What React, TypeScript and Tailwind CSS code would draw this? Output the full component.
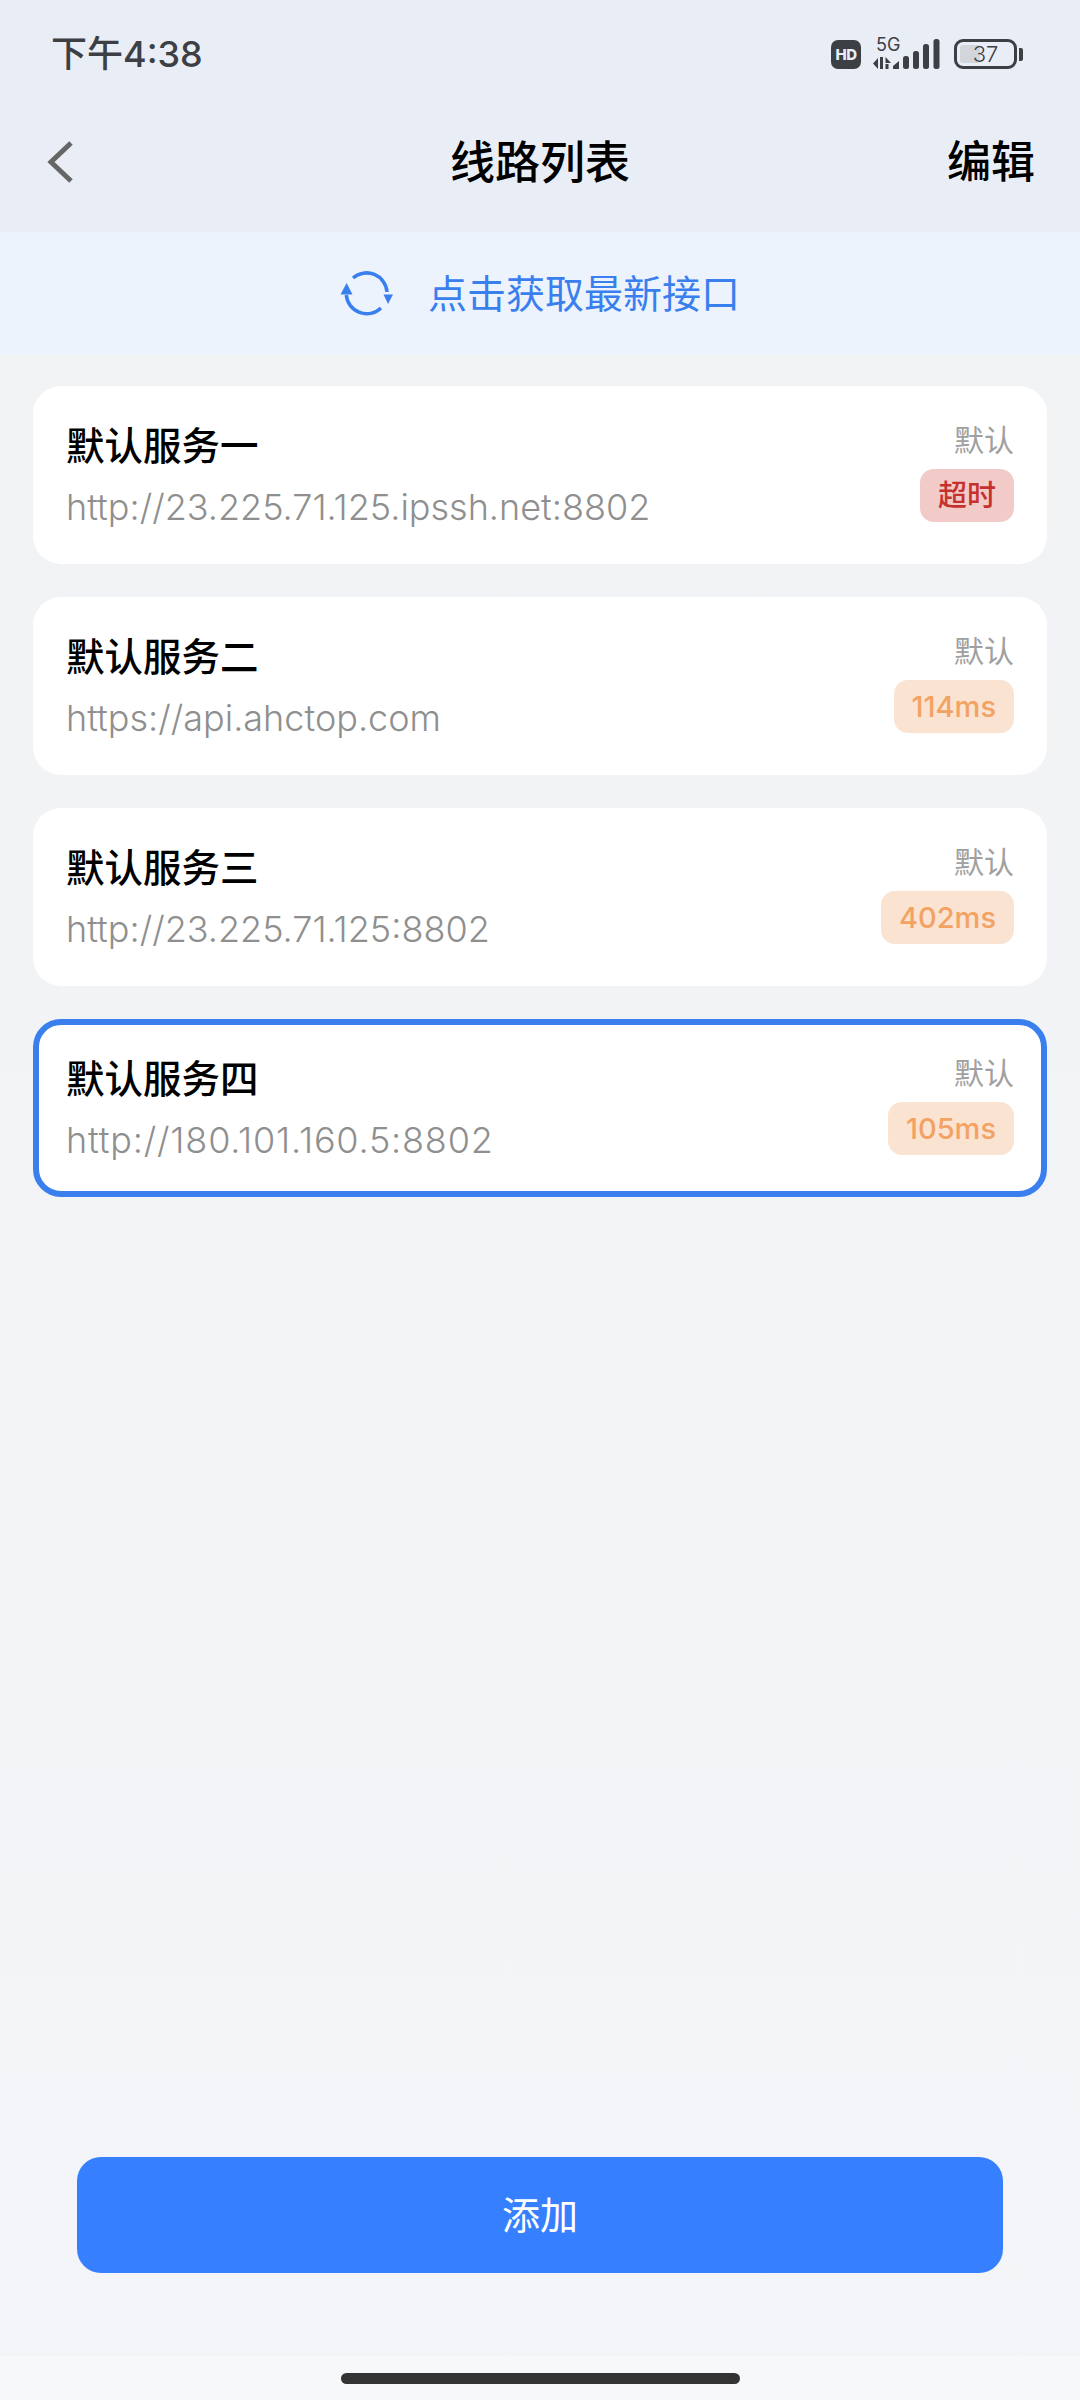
import React from "react";

const servers = [
  { name: "默认服务一", url: "http://23.225.71.125.ipssh.net:8802", badge: "超时", timeout: true },
  { name: "默认服务二", url: "https://api.ahctop.com", badge: "114ms" },
  { name: "默认服务三", url: "http://23.225.71.125:8802", badge: "402ms" },
  { name: "默认服务四", url: "http://180.101.160.5:8802", badge: "105ms", active: true },
];

const cjk = "font-['Inter','Noto_Sans_CJK_SC',sans-serif]";

function StatusIcons() {
  return (
    <div className="flex items-center text-[#3c3f43]">
      <div className="flex h-[29px] w-[30px] items-center justify-center rounded-[7px] bg-[#3c3f43] text-[15px] font-extrabold leading-none tracking-[-0.5px] text-[#e9eef6]">
        HD
      </div>
      <div className="relative ml-[12px] h-[32px] w-[67px]">
        <span className="absolute left-[3px] top-[-4px] text-[18px] leading-[22px]">5G</span>
        <svg className="absolute left-0 top-0" width="67" height="32" viewBox="0 0 67 32" fill="#3c3f43">
          <path d="M0 25.5 L5 20 V31 Z M7 19 h3 V31 h-3 Z M12.5 19 L18 25 H12.5 Z M12.5 26 h3 v5 h-3 Z" />
          <path d="M20 31 V28 L26 23 V31 Z" />
          <rect x="30" y="18" width="6" height="13" rx="2.5" />
          <rect x="40" y="13" width="6" height="18" rx="2.5" />
          <rect x="50" y="6" width="6" height="25" rx="2.5" />
          <rect x="60.5" y="1" width="6" height="30" rx="2.5" />
        </svg>
      </div>
      <div className="ml-[14px] flex items-center">
        <div className="relative flex h-[30px] w-[63px] items-center justify-center overflow-hidden rounded-[9px] border-[3px] border-[#3c3f43]">
          <div className="absolute bottom-[3px] left-[3px] top-[3px] w-[20px] rounded-[3px] bg-[#d2d5d9]" />
          <span className="relative text-[22px] font-light leading-none">37</span>
        </div>
        <div className="ml-[2px] h-[13px] w-[4px] rounded-r-[2px] bg-[#3c3f43]" />
      </div>
    </div>
  );
}

function ServerCard({ name, url, badge, timeout, active }: (typeof servers)[number]) {
  return (
    <div
      className={`flex h-[178px] items-start justify-between rounded-[28px] bg-white ${
        active ? "border-[6px] border-[#3a7fee] pl-[27px] pr-[27px] pt-[30px]" : "pl-[33px] pr-[33px] pt-[36px]"
      }`}
    >
      <div>
        <div className="text-[38.5px] font-medium leading-[48px] text-black">{name}</div>
        <div
          className={`mt-[15px] text-[36px] font-light leading-[44px] text-[#8f8f8f] ${
            active ? "tracking-[0.8px]" : ""
          }`}
        >
          {url}
        </div>
      </div>
      <div className="-mt-[1px] flex flex-col items-end">
        <div className="text-[30px] leading-[38px] text-[#a0a0a0]">默认</div>
        <div
          className={`mt-[10px] flex h-[53px] items-center justify-center rounded-[14px] px-[18px] text-[29px] font-medium leading-none ${
            timeout ? "bg-[#f2cbc9] text-[#c5322d]" : "bg-[#fbe3d2] text-[#f2a263]"
          }`}
        >
          {badge}
        </div>
      </div>
    </div>
  );
}

export default function App() {
  return (
    <div className={`flex h-[2400px] w-[1080px] flex-col overflow-hidden bg-linear-to-b from-[#f0f2f4] to-[#f3f5f8] ${cjk}`}>
      <header className="h-[232px] bg-[#e9eef6]">
        <div className="flex h-[108px] items-center justify-between pl-[51px] pr-[57px]">
          <span className="text-[36px] font-medium leading-none text-[#3c3f43]">下午4:38</span>
          <StatusIcons />
        </div>
        <div className="relative flex h-[108px] items-center justify-center">
          <svg className="absolute left-[44px] top-[30px]" width="32" height="48" viewBox="0 0 32 48" fill="none">
            <path d="M27 5 L7 24 L27 43" stroke="#666" strokeWidth="5" />
          </svg>
          <span className="text-[45px] font-medium leading-none text-black">线路列表</span>
          <span className="absolute right-[45px] text-[44px] font-medium leading-none text-black">编辑</span>
        </div>
      </header>

      <div className="flex h-[123px] items-center justify-center gap-[34px] bg-[#edf3fd]">
        <svg width="54" height="46" viewBox="0 0 54 46" fill="none">
          <path d="M13 7 A20.5 20.5 0 0 1 47 21" stroke="#3a7fee" strokeWidth="3.5" />
          <path d="M6.3 24 A20.5 20.5 0 0 0 41 37" stroke="#3a7fee" strokeWidth="3.5" />
          <path d="M0.5 23.5 L6.6 12 L12.5 23.5 Z M43.5 23.5 L53 23.5 L48 33 Z" fill="#3a7fee" />
        </svg>
        <span className="text-[39px] leading-none text-[#3a7fee]">点击获取最新接口</span>
      </div>

      <main className="flex flex-1 flex-col gap-[33px] px-[33px] pt-[31px]">
        {servers.map((server) => (
          <ServerCard key={server.name} {...server} />
        ))}
      </main>

      <div className="px-[77px] pb-[83px]">
        <button className="flex h-[116px] w-full items-center justify-center rounded-[24px] bg-[#3680ff] text-[38px] text-white">
          添加
        </button>
      </div>

      <div className="flex h-[44px] justify-center bg-[#f7f8f9] pt-[17px]">
        <div className="h-[11px] w-[399px] rounded-full bg-[#333]" />
      </div>
    </div>
  );
}
